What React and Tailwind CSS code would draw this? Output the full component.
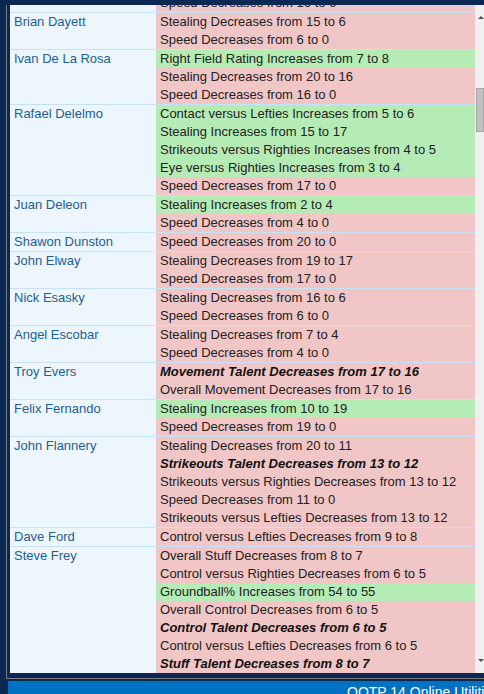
import React from "react";

// g = green (increase), b = bold italic talent line
const players = [
  {
    name: "Brian Dayett",
    changes: [
      { text: "Stealing Decreases from 15 to 6" },
      { text: "Speed Decreases from 6 to 0" },
    ],
  },
  {
    name: "Ivan De La Rosa",
    changes: [
      { text: "Right Field Rating Increases from 7 to 8", g: true },
      { text: "Stealing Decreases from 20 to 16" },
      { text: "Speed Decreases from 16 to 0" },
    ],
  },
  {
    name: "Rafael Delelmo",
    changes: [
      { text: "Contact versus Lefties Increases from 5 to 6", g: true },
      { text: "Stealing Increases from 15 to 17", g: true },
      { text: "Strikeouts versus Righties Increases from 4 to 5", g: true },
      { text: "Eye versus Righties Increases from 3 to 4", g: true },
      { text: "Speed Decreases from 17 to 0" },
    ],
  },
  {
    name: "Juan Deleon",
    changes: [
      { text: "Stealing Increases from 2 to 4", g: true },
      { text: "Speed Decreases from 4 to 0" },
    ],
  },
  {
    name: "Shawon Dunston",
    changes: [{ text: "Speed Decreases from 20 to 0" }],
  },
  {
    name: "John Elway",
    changes: [
      { text: "Stealing Decreases from 19 to 17" },
      { text: "Speed Decreases from 17 to 0" },
    ],
  },
  {
    name: "Nick Esasky",
    changes: [
      { text: "Stealing Decreases from 16 to 6" },
      { text: "Speed Decreases from 6 to 0" },
    ],
  },
  {
    name: "Angel Escobar",
    changes: [
      { text: "Stealing Decreases from 7 to 4" },
      { text: "Speed Decreases from 4 to 0" },
    ],
  },
  {
    name: "Troy Evers",
    changes: [
      { text: "Movement Talent Decreases from 17 to 16", b: true },
      { text: "Overall Movement Decreases from 17 to 16" },
    ],
  },
  {
    name: "Felix Fernando",
    changes: [
      { text: "Stealing Increases from 10 to 19", g: true },
      { text: "Speed Decreases from 19 to 0" },
    ],
  },
  {
    name: "John Flannery",
    changes: [
      { text: "Stealing Decreases from 20 to 11" },
      { text: "Strikeouts Talent Decreases from 13 to 12", b: true },
      { text: "Strikeouts versus Righties Decreases from 13 to 12" },
      { text: "Speed Decreases from 11 to 0" },
      { text: "Strikeouts versus Lefties Decreases from 13 to 12" },
    ],
  },
  {
    name: "Dave Ford",
    changes: [{ text: "Control versus Lefties Decreases from 9 to 8" }],
  },
  {
    name: "Steve Frey",
    changes: [
      { text: "Overall Stuff Decreases from 8 to 7" },
      { text: "Control versus Righties Decreases from 6 to 5" },
      { text: "Groundball% Increases from 54 to 55", g: true },
      { text: "Overall Control Decreases from 6 to 5" },
      { text: "Control Talent Decreases from 6 to 5", b: true },
      { text: "Control versus Lefties Decreases from 6 to 5" },
      { text: "Stuff Talent Decreases from 8 to 7", b: true },
    ],
  },
];

const Change = ({ c }) => (
  <div
    className={`${c.g ? "bg-[#b5ecb5]" : "bg-[#f0c6c6]"} ${
      c.b ? "font-bold italic text-[#111]" : "text-[#222]"
    } h-[18px] leading-[18px] pl-[4px] whitespace-nowrap`}
  >
    {c.text}
  </div>
);

const App = () => {
  return (
    <div
      className="w-[484px] h-[694px] bg-[#0b2852] overflow-hidden flex flex-col text-[13px]"
      style={{ fontFamily: '"Liberation Sans", Arial, sans-serif' }}
    >
      <div className="pl-[6px] pt-[5px]">
        <div className="border-l border-b border-[#7d7d7d] pl-[3px] pb-[5px]">
          <div className="flex h-[668px]">
            {/* table */}
            <div className="flex-1 overflow-hidden bg-[#eef6fd]">
              <div className="flex -mt-[11px]">
                <div className="w-[146px]" />
                <div className="flex-1">
                  <Change c={{ text: "Speed Decreases from 16 to 6" }} />
                </div>
              </div>
              {players.map((p) => (
                <div key={p.name} className="flex border-t border-[#c9e1f5]">
                  <div className="w-[146px] pl-[4px] h-[18px] leading-[18px] text-[#1d5f8f] whitespace-nowrap">
                    {p.name}
                  </div>
                  <div className="flex-1">
                    {p.changes.map((c, i) => (
                      <Change key={i} c={c} />
                    ))}
                  </div>
                </div>
              ))}
            </div>

            {/* scrollbar */}
            <div className="w-[9px] bg-[#f0f0f0] flex flex-col items-center">
              <div className="h-[14px] flex items-end">
                <div className="w-0 h-0 border-l-[3px] border-r-[3px] border-b-[3px] border-l-transparent border-r-transparent border-b-[#505050] ml-[2px]" />
              </div>
              <div className="mt-[69px] w-[8px] ml-[1px] h-[44px] bg-[#c1c1c1] border border-[#a8a8a8]" />
              <div className="flex-1" />
              <div className="h-[14px] flex items-start">
                <div className="w-0 h-0 border-l-[3px] border-r-[3px] border-t-[3px] border-l-transparent border-r-transparent border-t-[#505050] ml-[2px]" />
              </div>
            </div>
          </div>
        </div>
      </div>

      <div className="mt-[2px] ml-[8px] flex-1 bg-[#0070c0] flex">
        <span className="text-white text-[14px] leading-none pt-[4px] pl-[339px] whitespace-nowrap">
          OOTP 14 Online Utilities
        </span>
      </div>
    </div>
  );
};

export default App;
